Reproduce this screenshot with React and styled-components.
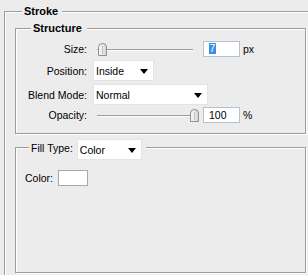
import React from 'react';
import styled, { createGlobalStyle } from 'styled-components';

const Global = createGlobalStyle`
  html, body { margin: 0; padding: 0; background: #ececec; overflow: hidden; }
  body {
    font-family: "Liberation Sans", Arial, sans-serif;
    font-size: 10.5px;
    color: #000;
  }
  * { box-sizing: border-box; }
`;

const Page = styled.div`
  width: 308px;
  height: 275px;
  overflow: hidden;
  padding: 11px 0 0 4px;
`;

const Group = styled.section`
  position: relative;
  border: 1px solid #9c9c9c;
  box-shadow: inset 1px 1px 0 #fff, 1px 1px 0 #fff;
  width: ${(p) => p.$w}px;
  height: ${(p) => p.$h}px;
  padding: ${(p) => p.$pad};
  margin-top: ${(p) => p.$mt || 0}px;
`;

const Legend = styled.div`
  position: absolute;
  left: ${(p) => p.$left}px;
  top: ${(p) => p.$top}px;
  background: #ececec;
  padding: 0 ${(p) => p.$pr || 4}px 0 2px;
  display: flex;
  align-items: center;
  gap: 4px;
  font-weight: ${(p) => (p.$bold ? 700 : 400)};
  font-size: ${(p) => (p.$bold ? '11px' : '10.5px')};
  line-height: 13px;
`;

const LegendLabel = styled.span`
  margin-top: -3px;
`;

const Rows = styled.div`
  display: flex;
  flex-direction: column;
`;

const Row = styled.div`
  display: grid;
  grid-template-columns: 71px auto;
  column-gap: 6px;
  align-items: center;
  height: ${(p) => p.$h}px;
`;

const Label = styled.span`
  text-align: right;
  white-space: nowrap;
`;

const Controls = styled.div`
  display: flex;
  align-items: center;
`;

const SelectBox = styled.div`
  position: relative;
  width: ${(p) => p.$w}px;
  height: 21px;
  background: #fff;
  border: 1px solid #e4e4e4;
  padding-left: 2px;
  display: flex;
  align-items: center;
  padding-top: 1px;
`;

const Arrow = styled.span`
  position: absolute;
  right: 5px;
  top: 8px;
  width: 0;
  height: 0;
  border-left: 4px solid transparent;
  border-right: 4px solid transparent;
  border-top: 5px solid #000;
`;

const SliderWrap = styled.div`
  position: relative;
  width: 102px;
  height: 12px;
  margin-left: 3px;
`;

const Track = styled.div`
  position: absolute;
  left: 1px;
  right: 5px;
  top: 6px;
  height: 1px;
  background: #9a9a9a;
  box-shadow: 0 1px 0 #fff;
`;

const Thumb = styled.svg`
  position: absolute;
  top: 0;
  display: block;
`;

const NumBox = styled.div`
  width: 37px;
  height: 16px;
  margin-left: 5px;
  background: #fff;
  border: 1px solid #b3c2d3;
  padding-left: 5px;
  display: flex;
  align-items: center;
  line-height: 11px;
`;

const Selected = styled.span`
  display: inline-block;
  background: #3a8ee6;
  color: #fff;
  height: 11px;
  line-height: 11px;
  padding: 0 0.5px;
`;

const Unit = styled.span`
  margin-left: 3px;
`;

const ColorRow = styled.div`
  display: flex;
  align-items: center;
  gap: 5px;
  height: 16px;
`;

const Swatch = styled.div`
  width: 30px;
  height: 16px;
  background: #fff;
  border: 1px solid #a8a8a8;
`;

function Select({ width, children }) {
  return (
    <SelectBox $w={width}>
      {children}
      <Arrow />
    </SelectBox>
  );
}

function Slider({ frac }) {
  const left = 2 + frac * 92;
  return (
    <SliderWrap>
      <Track />
      <Thumb width="9" height="13" viewBox="0 0 9 13" style={{ left }}>
        <defs>
          <linearGradient id={`g${frac}`} x1="0" x2="1" y1="0" y2="0">
            <stop offset="0" stopColor="#fafafa" />
            <stop offset="1" stopColor="#d4d4d4" />
          </linearGradient>
        </defs>
        <path
          d="M0.5 4 Q0.5 0.5 4.5 0.5 Q8.5 0.5 8.5 4 L8.5 12.5 L0.5 12.5 Z"
          fill={`url(#g${frac})`}
          stroke="#8e8e8e"
        />
        <line x1="4.5" y1="3" x2="4.5" y2="11" stroke="#c4c4c4" />
      </Thumb>
    </SliderWrap>
  );
}

export default function App() {
  return (
    <>
      <Global />
      <Page>
        <Group $w={330} $h={300} $pad="16px 0 0 10px">
          <Legend $left={17} $top={-7} $bold>Stroke</Legend>

          <Group $w={291} $h={106} $pad="10px 0 0 0">
            <Legend $left={15} $top={-7} $bold $pr={5}>Structure</Legend>
            <Rows>
              <Row $h={19}>
                <Label>Size:</Label>
                <Controls>
                  <Slider frac={0} />
                  <NumBox><Selected>7</Selected></NumBox>
                  <Unit>px</Unit>
                </Controls>
              </Row>
              <Row $h={25}>
                <Label>Position:</Label>
                <Controls>
                  <Select width={61}>Inside</Select>
                </Controls>
              </Row>
              <Row $h={23}>
                <Label>Blend Mode:</Label>
                <Controls>
                  <Select width={115}>Normal</Select>
                </Controls>
              </Row>
              <Row $h={18}>
                <Label>Opacity:</Label>
                <Controls>
                  <Slider frac={1} />
                  <NumBox>100</NumBox>
                  <Unit>%</Unit>
                </Controls>
              </Row>
            </Rows>
          </Group>

          <Group $w={291} $h={126} $mt={13} $pad="22px 0 0 9px">
            <Legend $left={13} $top={-9}>
              <LegendLabel>Fill Type:</LegendLabel>
              <Select width={65}>Color</Select>
            </Legend>
            <ColorRow>
              <span>Color:</span>
              <Swatch />
            </ColorRow>
          </Group>
        </Group>
      </Page>
    </>
  );
}
